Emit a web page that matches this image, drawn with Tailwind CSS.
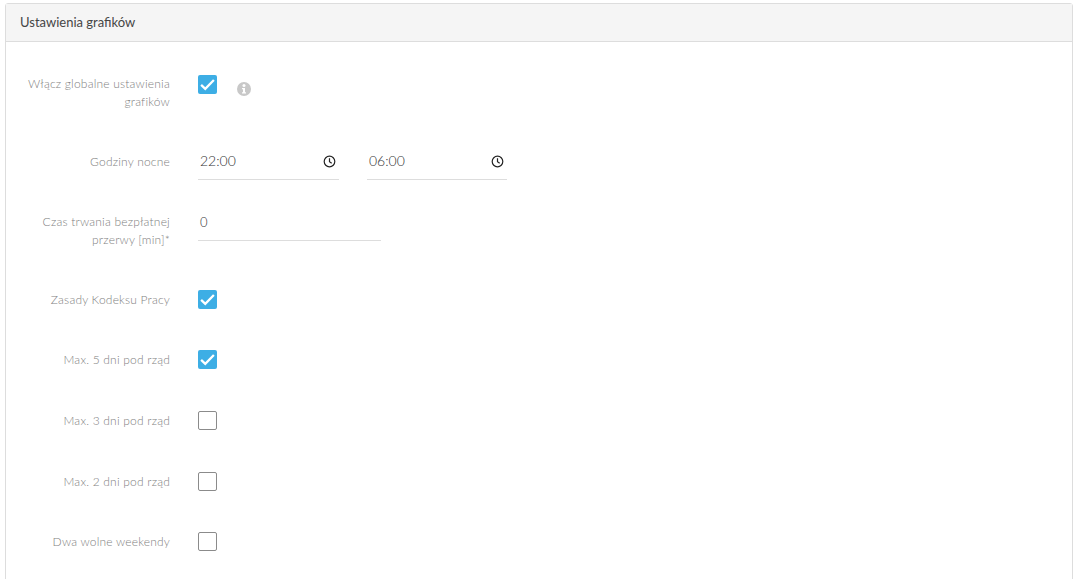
<!DOCTYPE html>
<html lang="pl">
<head>
  <meta charset="UTF-8" />
  <title>Ustawienia grafików</title>
  <script src="https://cdn.jsdelivr.net/npm/@tailwindcss/browser@4"></script>
</head>
<body class="h-[579px] overflow-hidden bg-white font-['Lato','Noto_Sans',sans-serif]">

  <section class="mt-[3px] ml-[5px] w-[1068px] h-[600px] border border-[#dddddd] rounded-t-[3px] opacity-[0.99]">
    <!-- naglowek -->
    <header class="h-[38px] bg-[#f5f5f5] border-b border-[#dddddd] flex items-center pl-[14px] text-[13px] text-[#444444]">
      Ustawienia grafików
    </header>

    <div class="text-[12px] leading-[18px] font-light tracking-[0.2px] text-[#808080]">

      <!-- globalne -->
      <div class="flex items-start mt-[33px] h-[36px]">
        <label class="w-[164px] shrink-0 text-right">Włącz globalne ustawienia grafików</label>
        <span class="ml-[28px] w-[19px] h-[19px] bg-[#3baee5] rounded-[2px] flex items-center justify-center">
          <svg class="w-[17px] h-[17px]" viewBox="0 0 16 16" fill="none" stroke="#ffffff" stroke-width="2.2"><path d="M2 8.300l3.900 3.700L14 3.800"/></svg>
        </span>
        <svg class="ml-[20px] mt-[7px] w-[14px] h-[14px]" viewBox="0 0 14 14"><circle cx="7" cy="7" r="7" fill="#c8c8c8"/><circle cx="7" cy="3.6" r="1.5" fill="#ffffff"/><path d="M5 6h3v4.2h1v1.3H5v-1.3h1V7.300H5z" fill="#ffffff"/></svg>
      </div>

      <!-- godziny nocne -->
      <div class="flex items-center mt-[32px] h-[37px]">
        <label class="w-[164px] shrink-0 text-right">Godziny nocne</label>
        <div class="ml-[28px] w-[141px] h-[37px] border-b border-[#dddddd] flex items-center justify-between pl-[2px] pr-[3px] text-[14px] tracking-normal text-[#333333]">
          <span>22:00</span>
          <svg class="w-[13px] h-[13px]" viewBox="0 0 13 13" fill="none" stroke="#222222" stroke-width="1.200"><circle cx="6.500" cy="6.500" r="5.300"/><path d="M6.500 3.300v3.400l2.200 1.500"/></svg>
        </div>
        <div class="ml-[28px] w-[140px] h-[37px] border-b border-[#dddddd] flex items-center justify-between pl-[2px] pr-[3px] text-[14px] tracking-normal text-[#333333]">
          <span>06:00</span>
          <svg class="w-[13px] h-[13px]" viewBox="0 0 13 13" fill="none" stroke="#222222" stroke-width="1.200"><circle cx="6.500" cy="6.500" r="5.300"/><path d="M6.500 3.300v3.400l2.200 1.500"/></svg>
        </div>
      </div>

      <!-- przerwa -->
      <div class="flex items-start mt-[24px] h-[45px]">
        <label class="w-[164px] shrink-0 text-right pt-[9px]">Czas trwania bezpłatnej przerwy [min]*</label>
        <div class="ml-[28px] w-[183px] h-[37px] border-b border-[#dddddd] flex items-center pl-[2px] pb-[1px] text-[13px] tracking-normal text-[#333333]">0</div>
      </div>

      <!-- checkboxy -->
      <div class="flex items-center mt-[41px] h-[19px]">
        <label class="w-[164px] shrink-0 text-right">Zasady Kodeksu Pracy</label>
        <span class="ml-[28px] w-[19px] h-[19px] bg-[#3baee5] rounded-[2px] flex items-center justify-center">
          <svg class="w-[17px] h-[17px]" viewBox="0 0 16 16" fill="none" stroke="#ffffff" stroke-width="2.2"><path d="M2 8.300l3.900 3.700L14 3.800"/></svg>
        </span>
      </div>

      <div class="flex items-center mt-[41px] h-[19px]">
        <label class="w-[164px] shrink-0 text-right">Max. 5 dni pod rząd</label>
        <span class="ml-[28px] w-[19px] h-[19px] bg-[#3baee5] rounded-[2px] flex items-center justify-center">
          <svg class="w-[17px] h-[17px]" viewBox="0 0 16 16" fill="none" stroke="#ffffff" stroke-width="2.2"><path d="M2 8.300l3.900 3.700L14 3.800"/></svg>
        </span>
      </div>

      <div class="flex items-center mt-[42px] h-[19px]">
        <label class="w-[164px] shrink-0 text-right">Max. 3 dni pod rząd</label>
        <span class="ml-[28px] w-[19px] h-[19px] border border-[#8a8a8a] rounded-[2px]"></span>
      </div>

      <div class="flex items-center mt-[42px] h-[19px]">
        <label class="w-[164px] shrink-0 text-right">Max. 2 dni pod rząd</label>
        <span class="ml-[28px] w-[19px] h-[19px] border border-[#8a8a8a] rounded-[2px]"></span>
      </div>

      <div class="flex items-center mt-[41px] h-[19px]">
        <label class="w-[164px] shrink-0 text-right">Dwa wolne weekendy</label>
        <span class="ml-[28px] w-[19px] h-[19px] border border-[#8a8a8a] rounded-[2px]"></span>
      </div>
    </div>
  </section>

</body>
</html>
